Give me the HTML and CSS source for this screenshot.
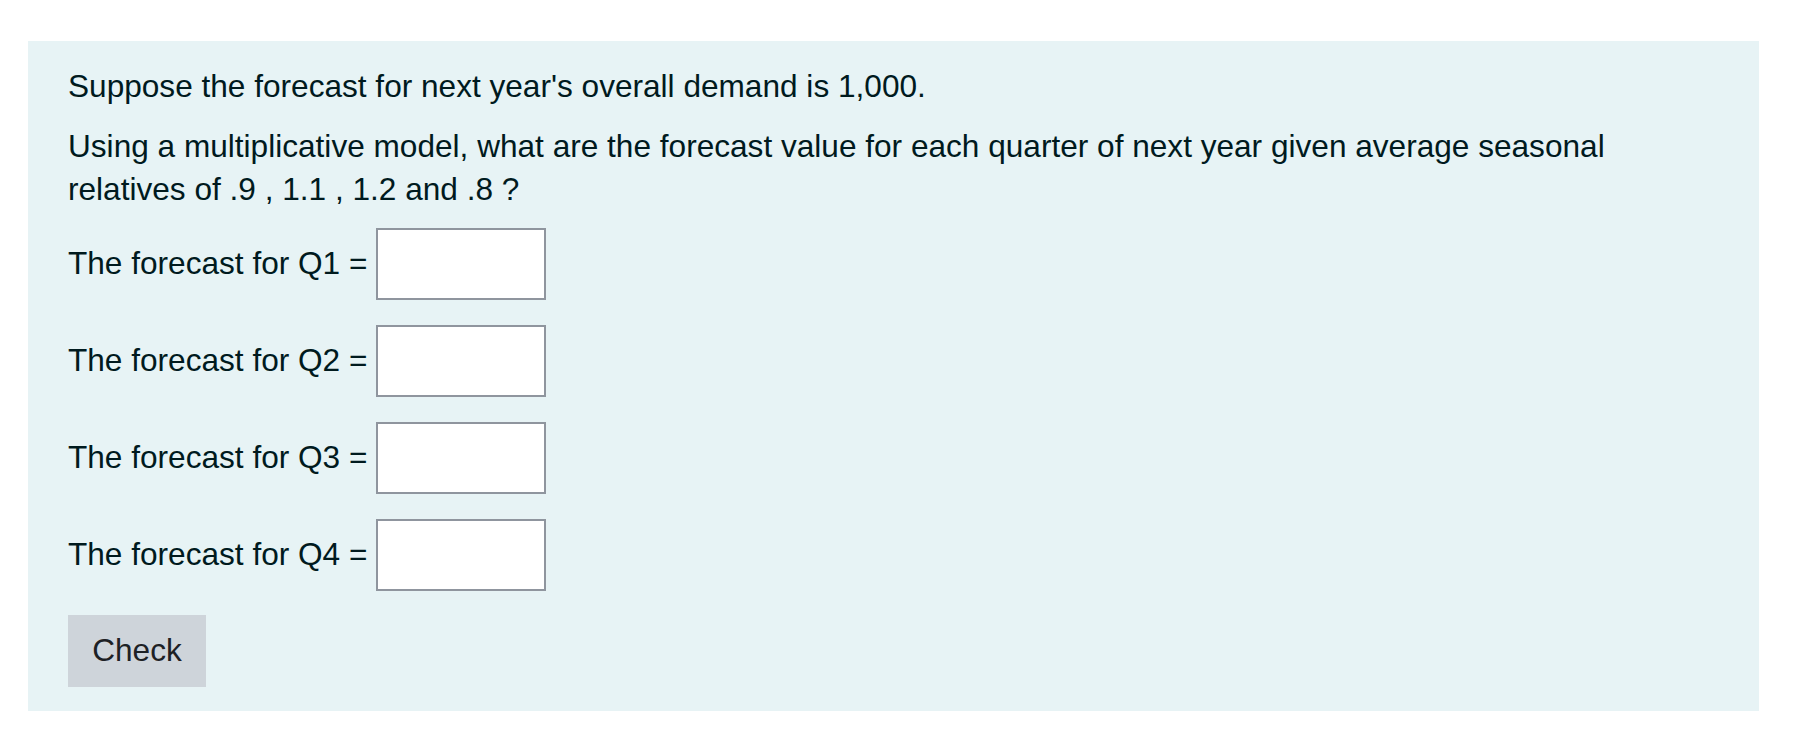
FILE: index.html
```html
<!DOCTYPE html>
<html lang="en">
<head>
<meta charset="utf-8">
<title>Question</title>
<link rel="stylesheet" href="styles.css">
</head>
<body>
<div class="page">
  <div class="formulation">
    <p class="qtext">Suppose the forecast for next year's overall demand is 1,000.</p>
    <p class="qtext">Using a multiplicative model, what are the forecast value for each quarter of next year given average seasonal relatives of .9 , 1.1 , 1.2 and .8 ?</p>
    <div class="answers">
      <div class="row"><label class="lbl" for="q1">The forecast for Q1 =</label><input class="box" id="q1" type="text"></div>
      <div class="row"><label class="lbl" for="q2">The forecast for Q2 =</label><input class="box" id="q2" type="text"></div>
      <div class="row"><label class="lbl" for="q3">The forecast for Q3 =</label><input class="box" id="q3" type="text"></div>
      <div class="row"><label class="lbl" for="q4">The forecast for Q4 =</label><input class="box" id="q4" type="text"></div>
    </div>
    <button class="check" type="button">Check</button>
  </div>
</div>
</body>
</html>
```
FILE: styles.css
```css
html, body {
  margin: 0;
  padding: 0;
  background: #ffffff;
}
body {
  font-family: "Liberation Sans", Arial, Helvetica, sans-serif;
  font-size: 31.6px;
  line-height: 43.5px;
  color: #001a1e;
}
.page {
  padding: 41px 35px 30px 28px;
}
.formulation {
  background: #e7f3f5;
  padding: 24px 40px 24px 40px;
}
.qtext {
  margin: 0 0 16px 0;
}
.answers {
  display: flex;
  flex-direction: column;
  gap: 25px;
  margin-bottom: 24px;
}
.row {
  display: flex;
  align-items: center;
}
.lbl {
  margin-right: 8.8px;
}
.box {
  box-sizing: border-box;
  width: 170px;
  height: 72px;
  border: 2px solid #8f959e;
  background: #ffffff;
  margin: 0;
  padding: 0 12px;
  font: inherit;
  border-radius: 0;
}
.check {
  display: block;
  box-sizing: border-box;
  width: 138px;
  height: 72px;
  margin: 0;
  padding: 0;
  border: none;
  border-radius: 0;
  background: #ced4da;
  color: #1d2125;
  font-family: inherit;
  font-size: 31.6px;
  line-height: 43.5px;
  text-align: center;
}
```
